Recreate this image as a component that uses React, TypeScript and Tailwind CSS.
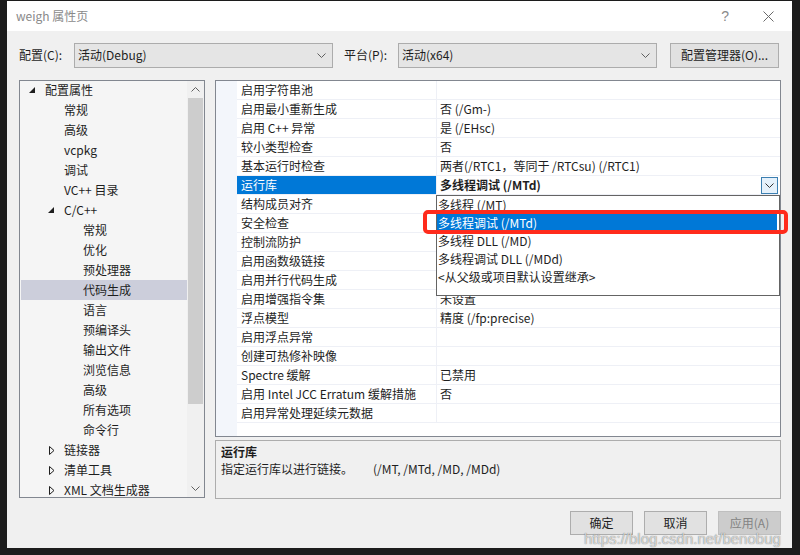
import { ReactNode } from "react"

type TreeItem = {
  label: string
  level: number
  expander?: "open" | "closed"
  selected?: boolean
}

const treeItems: TreeItem[] = [
  { label: "配置属性", level: 0, expander: "open" },
  { label: "常规", level: 1 },
  { label: "高级", level: 1 },
  { label: "vcpkg", level: 1 },
  { label: "调试", level: 1 },
  { label: "VC++ 目录", level: 1 },
  { label: "C/C++", level: 1, expander: "open" },
  { label: "常规", level: 2 },
  { label: "优化", level: 2 },
  { label: "预处理器", level: 2 },
  { label: "代码生成", level: 2, selected: true },
  { label: "语言", level: 2 },
  { label: "预编译头", level: 2 },
  { label: "输出文件", level: 2 },
  { label: "浏览信息", level: 2 },
  { label: "高级", level: 2 },
  { label: "所有选项", level: 2 },
  { label: "命令行", level: 2 },
  { label: "链接器", level: 1, expander: "closed" },
  { label: "清单工具", level: 1, expander: "closed" },
  { label: "XML 文档生成器", level: 1, expander: "closed" },
]

const props: [string, string][] = [
  ["启用字符串池", ""],
  ["启用最小重新生成", "否 (/Gm-)"],
  ["启用 C++ 异常", "是 (/EHsc)"],
  ["较小类型检查", "否"],
  ["基本运行时检查", "两者(/RTC1，等同于 /RTCsu) (/RTC1)"],
  ["运行库", "多线程调试 (/MTd)"],
  ["结构成员对齐", "默认设置"],
  ["安全检查", "启用安全检查 (/GS)"],
  ["控制流防护", "否"],
  ["启用函数级链接", ""],
  ["启用并行代码生成", ""],
  ["启用增强指令集", "未设置"],
  ["浮点模型", "精度 (/fp:precise)"],
  ["启用浮点异常", ""],
  ["创建可热修补映像", ""],
  ["Spectre 缓解", "已禁用"],
  ["启用 Intel JCC Erratum 缓解措施", "否"],
  ["启用异常处理延续元数据", ""],
]

const options = [
  "多线程 (/MT)",
  "多线程调试 (/MTd)",
  "多线程 DLL (/MD)",
  "多线程调试 DLL (/MDd)",
  "<从父级或项目默认设置继承>",
]

const Chevron = ({ up = false, className = "" }: { up?: boolean; className?: string }) => (
  <svg width="9" height="5" viewBox="0 0 9 5" className={className}>
    <polyline
      points={up ? "0.5,4.5 4.5,0.5 8.5,4.5" : "0.5,0.5 4.5,4.5 8.5,0.5"}
      fill="none"
      stroke="currentColor"
      strokeWidth="1"
    />
  </svg>
)

const Select = ({ value }: { value: string }) => (
  <div className="flex h-[25px] w-[259px] items-center justify-between border border-[#acacac] bg-[#e5e5e5] pl-[3px] pr-[6px]">
    <span>{value}</span>
    <Chevron className="text-[#5f5f5f]" />
  </div>
)

const Button = ({ children, disabled }: { children: ReactNode; disabled?: boolean }) => (
  <div
    className={
      disabled
        ? "flex h-[24px] w-[63px] items-center justify-center border border-[#bfbfbf] bg-[#cccccc] text-[#838383]"
        : "flex h-[24px] w-[63px] items-center justify-center border border-[#adadad] bg-[#e1e1e1]"
    }
  >
    {children}
  </div>
)

const Expander = ({ kind }: { kind: "open" | "closed" }) =>
  kind === "open" ? (
    <svg width="7" height="7" viewBox="0 0 7 7">
      <polygon points="6,0 6,6 0,6" fill="#1e1e1e" />
    </svg>
  ) : (
    <svg width="6" height="9" viewBox="0 0 6 9">
      <polygon points="0.5,0.5 5,4.5 0.5,8.5" fill="none" stroke="#1e1e1e" strokeWidth="1" />
    </svg>
  )

const Tree = () => (
  <div className="relative flex h-[418px] w-[186px] border border-[#828790] bg-[#f5f5f5]">
    <div className="flex-1 overflow-hidden">
      <div className="-mt-[1px]">
        {treeItems.map((item, i) => (
          <div
            key={i}
            className={`flex h-[20px] items-center ${item.selected ? "ml-[1px] bg-[#cccedb]" : ""}`}
          >
            <div
              className={
                item.level === 0
                  ? "flex w-[25px] shrink-0 justify-end pr-[9px]"
                  : item.level === 1
                  ? "flex w-[44px] shrink-0 justify-end pr-[9px]"
                  : "flex w-[63px] shrink-0 justify-end pr-[9px]"
              }
            >
              {item.expander && <Expander kind={item.expander} />}
            </div>
            <span className={item.selected ? "-ml-[1px]" : ""}>{item.label}</span>
          </div>
        ))}
      </div>
    </div>
    <div className="flex w-[17px] flex-col items-center bg-[#f0f0f0]">
      <div className="flex h-[17px] items-center text-[#606060]">
        <Chevron up />
      </div>
      <div className="h-[306px] w-[15px] bg-[#cdcdcd]" />
      <div className="flex-1" />
      <div className="flex h-[17px] items-center text-[#606060]">
        <Chevron />
      </div>
    </div>
  </div>
)

const PropertyGrid = () => (
  <div className="relative h-[357px] w-[566px] border border-[#828790] bg-white">
    <div className="flex h-full">
      <div className="w-[21px] shrink-0 bg-[#f3f6fb]" />
      <div className="flex-1">
        {props.map(([name, value], i) => {
          const sel = name === "运行库"
          return (
            <div key={i} className="flex h-[19px] border-b border-[#eef0f6]">
              <div
                className={`flex w-[199px] shrink-0 items-center pl-[4px] ${
                  sel ? "bg-[#0078d7] text-white" : ""
                }`}
              >
                {name}
              </div>
              <div className="w-[1px] bg-[#eef0f6]" />
              <div className="flex flex-1 items-center justify-between pl-[3px] pr-[2px]">
                <span className={sel ? "font-bold" : ""}>{value}</span>
                {sel && (
                  <div className="flex h-[17px] w-[17px] items-center justify-center border border-[#3c7fb1] bg-[#e5f1fb] text-[#333]">
                    <Chevron />
                  </div>
                )}
              </div>
            </div>
          )
        })}
      </div>
    </div>

    {/* open dropdown list */}
    <div className="absolute left-[220px] top-[114px] h-[101px] w-[344px] border border-[#646464] bg-white">
      {options.map((opt, i) => (
        <div
          key={i}
          className={`flex h-[18px] items-center pl-[1px] ${
            i === 1 ? "mr-[2px] bg-[#0078d7] text-white" : ""
          }`}
        >
          {opt}
        </div>
      ))}
    </div>
  </div>
)

export default function App() {
  return (
    <div className="relative h-[555px] w-[800px] bg-[#1c1c1c] pl-[7px] pt-[1px] font-['Noto_Sans_CJK_SC',sans-serif] text-[12px] leading-none text-[#1e1e1e]">
      <div className="flex h-[547px] w-[785px] flex-col bg-[#f0f0f0]">
        <div className="flex h-[30px] items-center justify-between bg-white pl-[9px] pr-[18px]">
          <span className="text-[#8a8a8a]">weigh 属性页</span>
          <div className="flex items-center gap-[34px] text-[#8a8a8a]">
            <span className="font-['Liberation_Sans',sans-serif] text-[14px]">?</span>
            <svg width="11" height="11" viewBox="0 0 11 11">
              <path d="M0.5 0.5 L10.5 10.5 M10.5 0.5 L0.5 10.5" stroke="#6a6a6a" strokeWidth="1" />
            </svg>
          </div>
        </div>

        <div className="flex flex-1 flex-col pl-[12px] pt-[11px]">
          <div className="flex h-[26px] items-center">
            <span className="w-[55px]">配置(C):</span>
            <Select value="活动(Debug)" />
            <span className="ml-[11px] w-[54px]">平台(P):</span>
            <Select value="活动(x64)" />
            <div className="ml-[13px] flex h-[25px] w-[109px] items-center justify-center border border-[#adadad] bg-[#e1e1e1]">
              配置管理器(O)...
            </div>
          </div>

          <div className="mt-[12px] flex gap-[10px]">
            <Tree />
            <div className="flex flex-col">
              <PropertyGrid />
              <div className="mt-[3px] h-[59px] w-[566px] border border-[#adadad] bg-[#f0f0f0] px-[5px] pt-[5px]">
                <div className="font-bold">运行库</div>
                <div className="mt-[5px] flex">
                  <span className="w-[152px]">指定运行库以进行链接。</span>
                  <span>(/MT, /MTd, /MD, /MDd)</span>
                </div>
              </div>
            </div>
          </div>

          <div className="mt-[12px] flex justify-end gap-[11px] pr-[11px]">
            <Button>确定</Button>
            <Button>取消</Button>
            <Button disabled>应用(A)</Button>
          </div>
        </div>
      </div>

      {/* red highlight drawn over the selected option */}
      <div className="absolute left-[423px] top-[210px] h-[24px] w-[365px] rounded-[5px] border-[4px] border-[#ff2b1c]" />

      <div className="absolute left-[584px] top-[531px] font-['Liberation_Sans',sans-serif] text-[15px] text-white/70 [text-shadow:0_0_1px_#555]">
        https://blog.csdn.net/benobug
      </div>
    </div>
  )
}
